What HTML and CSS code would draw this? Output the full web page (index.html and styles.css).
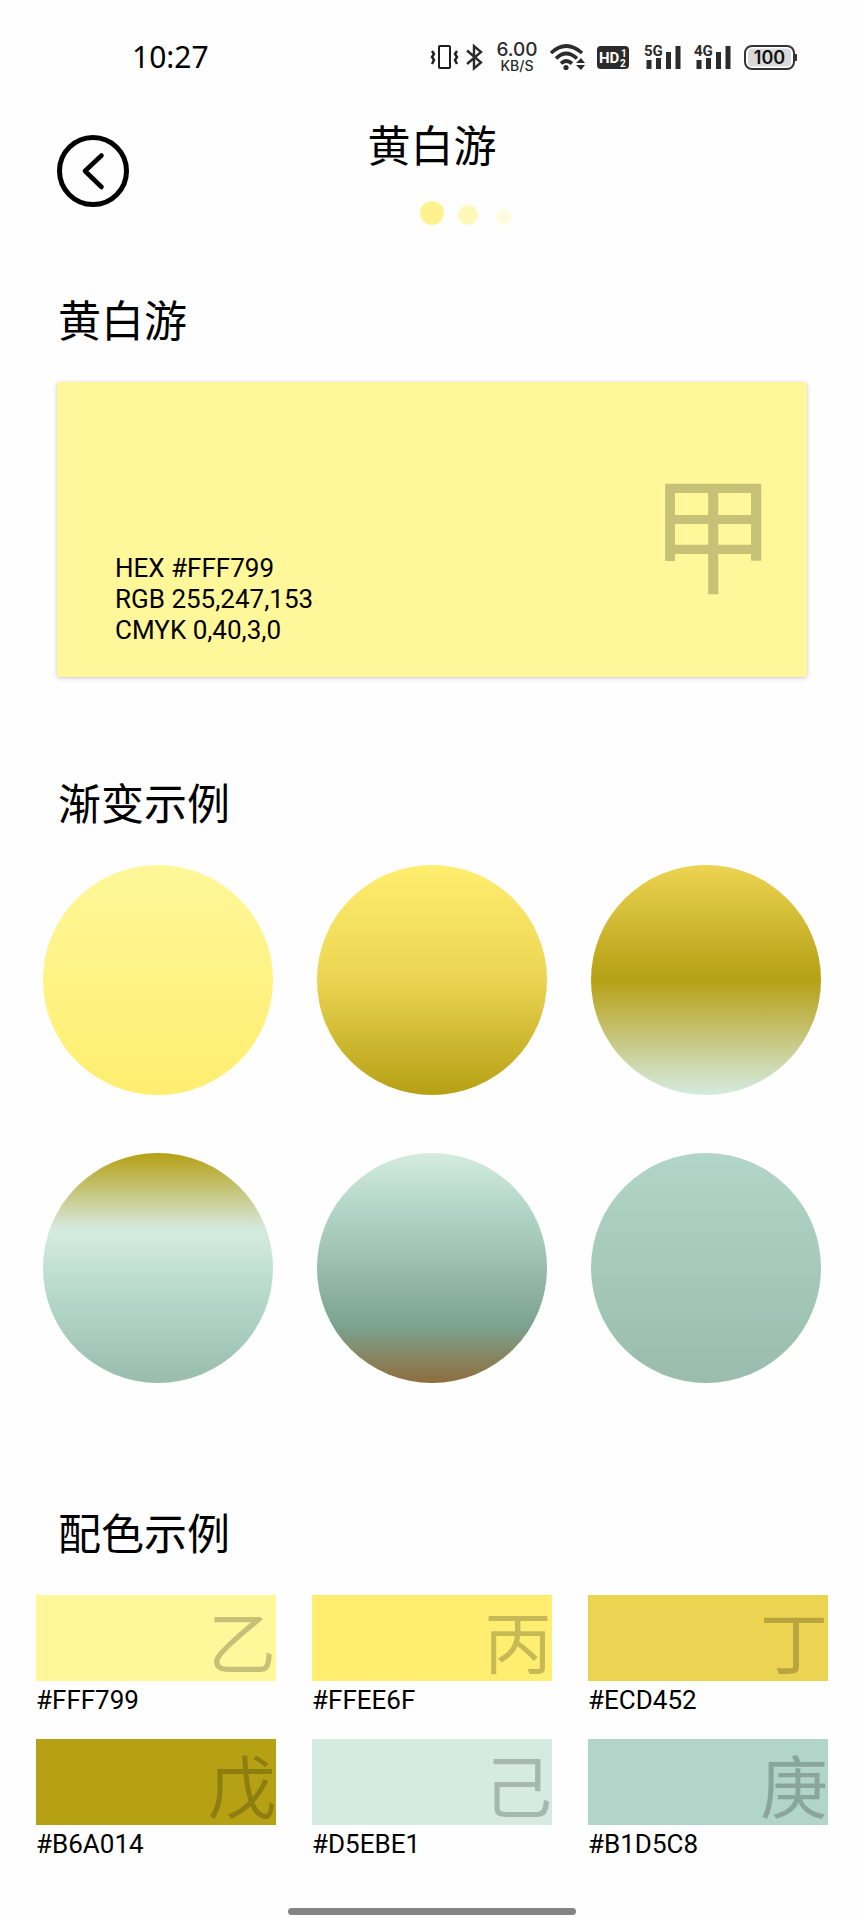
FILE: index.html
```
<!DOCTYPE html>
<html lang="zh-CN">
<head>
<meta charset="utf-8">
<meta name="viewport" content="width=device-width, initial-scale=1">
<title>黄白游</title>
<link rel="stylesheet" href="styles.css">
</head>
<body>
<div class="status">
  <time class="clock">10:27</time>
  <div class="status-icons">
    <svg width="54" height="28" viewBox="0 0 54 28" fill="none" stroke="#1c1c1c" stroke-width="2">
      <rect x="8" y="3" width="11" height="22" rx="1"/>
      <path d="M1 8l2 3-2 3 2 3-2 4M26 8l-2 3 2 3-2 3 2 4" stroke-width="2.400"/>
      <path d="M36 7.500l14 12-7 6V3l7 6-14 12" stroke="#2b2b2b" stroke-width="2.400"/>
    </svg>
    <div class="speed"><span class="speed-value">6.00</span><span class="speed-unit">KB/S</span></div>
    <svg width="36" height="28" viewBox="0 0 36 28">
      <g fill="none" stroke="#2b2b2b" stroke-width="3.600">
        <path d="M2 10q15-14 31 0"/><path d="M7 15.500q10-10 21 0"/><path d="M12 20.500q5-5 11 0"/>
      </g>
      <circle cx="17" cy="24.500" r="2.600" fill="#2b2b2b"/>
      <path d="M27 20l5-5 4 5zM27 22h9l-4 5z" fill="#2b2b2b" stroke="#fefefe" stroke-width="1" paint-order="stroke"/>
    </svg>
    <svg width="35" height="28" viewBox="0 0 35 28" class="hd">
      <rect x="0" y="3" width="32" height="23" rx="4" fill="#2b2b2b"/>
      <text x="2" y="20" font-size="15">HD</text>
      <text x="24" y="14" font-size="10">1</text>
      <text x="23" y="24" font-size="10">2</text>
    </svg>
    <svg width="38" height="28" viewBox="0 0 38 28" class="signal">
      <text x="0" y="13" font-size="15">5G</text>
      <path d="M5 17v9M14.500 15v11M24.500 9v17M34 3v23"/>
    </svg>
    <svg width="38" height="28" viewBox="0 0 38 28" class="signal">
      <text x="0" y="13" font-size="15">4G</text>
      <path d="M5 17v9M14.500 15v11M24.500 9v17M34 3v23"/>
    </svg>
    <svg width="53" height="28" viewBox="0 0 53 28" class="battery">
      <rect x="1" y="3" width="49" height="23" rx="7" fill="#fff" stroke="#333" stroke-width="2"/>
      <rect x="4" y="5.500" width="43" height="18" rx="4" fill="#d9d9d9"/>
      <path d="M52 11v7" stroke="#333" stroke-width="2"/>
      <text x="25.500" y="21" font-size="18" text-anchor="middle">100</text>
    </svg>
  </div>
</div>

<header class="header">
  <button class="back" type="button" aria-label="返回">
    <svg width="72" height="72" viewBox="0 0 72 72" fill="none" stroke="#000">
      <circle cx="36" cy="36" r="33.500" stroke-width="5"/>
      <path d="M44.500 20.500L28 36l16.500 16" stroke-width="4.600" stroke-linecap="round" stroke-linejoin="round"/>
    </svg>
  </button>
  <div class="heading">
    <h1 class="title">黄白游</h1>
    <div class="dots"><i class="dot dot-large"></i><i class="dot dot-medium"></i><i class="dot dot-small"></i></div>
  </div>
</header>

<main class="main">
  <section class="detail">
    <h2 class="title">黄白游</h2>
    <div class="card">
      <p class="values">HEX #FFF799<br>RGB 255,247,153<br>CMYK 0,40,3,0</p>
      <span class="card-mark">甲</span>
    </div>
  </section>

  <section class="gradients">
    <h2 class="title">渐变示例</h2>
    <div class="circles">
      <div class="circle g1"></div><div class="circle g2"></div><div class="circle g3"></div>
      <div class="circle g4"></div><div class="circle g5"></div><div class="circle g6"></div>
    </div>
  </section>

  <section class="palette">
    <h2 class="title">配色示例</h2>
    <ul class="swatches">
      <li><div class="swatch c1">乙</div><p class="code">#FFF799</p></li>
      <li><div class="swatch c2">丙</div><p class="code">#FFEE6F</p></li>
      <li><div class="swatch c3">丁</div><p class="code">#ECD452</p></li>
      <li><div class="swatch c4">戊</div><p class="code">#B6A014</p></li>
      <li><div class="swatch c5">己</div><p class="code">#D5EBE1</p></li>
      <li><div class="swatch c6">庚</div><p class="code">#B1D5C8</p></li>
    </ul>
  </section>
</main>
<div class="home-bar"></div>
</body>
</html>
```
FILE: styles.css
```
* { box-sizing: border-box; margin: 0; padding: 0; }

body {
  min-height: 100vh;
  display: flex;
  flex-direction: column;
  background: #fefefe;
  color: #000;
  font-family: Roboto, "Noto Sans CJK SC", sans-serif;
}

.status {
  display: flex;
  align-items: center;
  justify-content: space-between;
  padding: 36px 67px 0 132px;
}
.clock { font: 30px/42px "Noto Sans", sans-serif; }
.status-icons { display: flex; align-items: center; gap: 12px; }
.status-icons svg { overflow: visible; }
.speed {
  width: 40px;
  display: flex;
  flex-direction: column;
  align-items: center;
  color: #2b2b2b;
  font-family: Inter, sans-serif;
  font-weight: 500;
}
.speed-value { font-size: 19px; line-height: 18px; }
.speed-unit { font-size: 14px; line-height: 14px; }
.hd text { fill: #fff; font-family: Roboto, sans-serif; font-weight: 700; }
.signal text { fill: #2b2b2b; font-family: Roboto, sans-serif; font-weight: 700; }
.signal path { fill: none; stroke: #2b2b2b; stroke-width: 5; }
.battery text { fill: #111; font-family: Inter, sans-serif; font-weight: 600; }

.header {
  display: grid;
  grid-template-columns: 72px 1fr 72px;
  align-items: center;
  padding: 39px 57px 0;
}
.back { width: 72px; height: 72px; border: 0; background: none; cursor: pointer; }
.back svg { display: block; }
.heading { display: flex; flex-direction: column; align-items: center; gap: 24px; }
.title { font-size: 43px; line-height: 60px; font-weight: 400; }
.dots {
  display: grid;
  grid-template-columns: repeat(3, 36px);
  align-items: end;
  justify-items: center;
  padding-left: 72px;
}
.dot { border-radius: 50%; }
.dot-large { width: 24px; height: 24px; background: #fff28f; }
.dot-medium { width: 20px; height: 20px; background: #fff8b6; }
.dot-small { width: 16px; height: 16px; background: #fffbe0; }

.main { flex: 1; display: flex; flex-direction: column; }
.detail { padding: 67px 57px 98px; }
.gradients { padding: 0 43px 122px; }
.palette { padding: 0 36px; }
.detail .title { margin: 0 1px 30px; }
.gradients .title { margin: 0 15px 30px; }
.palette .title { margin: 0 22px 30px; }

.card {
  min-height: 295px;
  display: flex;
  justify-content: space-between;
  align-items: flex-end;
  padding: 31px 30px 31px 58px;
  border-radius: 4px;
  background: #fff799;
  box-shadow: 0 1px 4px rgba(60, 60, 110, 0.3);
}
.values { font-size: 26px; line-height: 31px; }
.card-mark { font-size: 128px; line-height: 212px; color: rgba(0, 0, 0, 0.22); }

.circles { display: grid; grid-template-columns: repeat(3, 1fr); gap: 58px 44px; }
.circle { aspect-ratio: 1; border-radius: 50%; }
.g1 { background: linear-gradient(#fff799, #ffee6f); }
.g2 { background: linear-gradient(#ffee6f, #ecd452, #b6a014); }
.g3 { background: linear-gradient(#ecd452, #b6a014, #d5ebe1); }
.g4 { background: linear-gradient(#b6a014, #d5ebe1, #b1d5c8, #99bcac); }
.g5 { background: linear-gradient(#d5ebe1, #b1d5c8, #99bcac, #7ba390, #8f6d3d); }
.g6 { background: linear-gradient(#b1d5c8, #99bcac); }

.swatches { display: grid; grid-template-columns: repeat(3, 1fr); gap: 24px 36px; list-style: none; }
.swatch {
  height: 86px;
  display: flex;
  justify-content: flex-end;
  align-items: flex-end;
  font-size: 68px;
  line-height: 70px;
  color: rgba(0, 0, 0, 0.22);
}
.c1 { background: #fff799; }
.c2 { background: #ffee6f; }
.c3 { background: #ecd452; }
.c4 { background: #b6a014; }
.c5 { background: #d5ebe1; }
.c6 { background: #b1d5c8; }
.code { padding-top: 4px; font-size: 26px; line-height: 30px; }

.home-bar { width: 288px; height: 7px; margin: 0 auto 5px; border-radius: 4px; background: #848484; }
```
